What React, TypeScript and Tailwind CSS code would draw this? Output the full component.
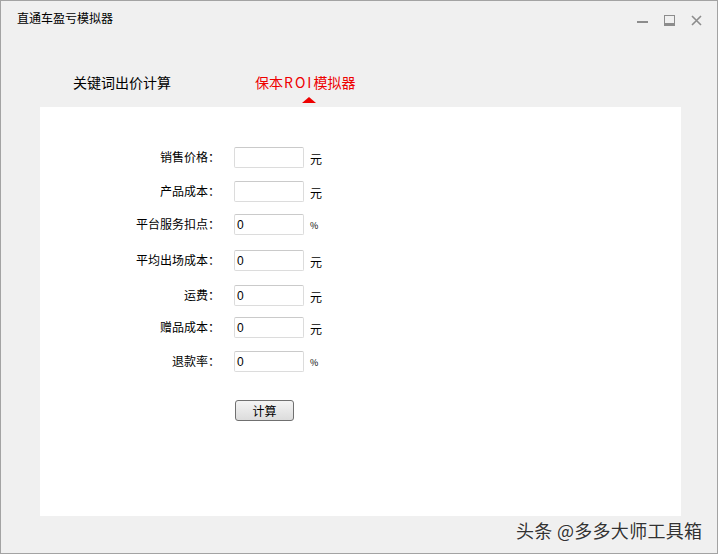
import React from "react";

const rows = [
  { label: "销售价格：", value: "", unit: "元", mt: "mt-0" },
  { label: "产品成本：", value: "", unit: "元", mt: "mt-[13px]" },
  { label: "平台服务扣点：", value: "0", unit: "%", mt: "mt-[12px]" },
  { label: "平均出场成本：", value: "0", unit: "元", mt: "mt-[15px]" },
  { label: "运费：", value: "0", unit: "元", mt: "mt-[14px]" },
  { label: "赠品成本：", value: "0", unit: "元", mt: "mt-[11px]" },
  { label: "退款率：", value: "0", unit: "%", mt: "mt-[13px]" },
];

const cjk = "font-['SimSun','Noto_Sans_CJK_SC',sans-serif]";

function WindowControls() {
  return (
    <div className="flex items-center gap-[16px] mt-[14px] text-[#8c8c8c]">
      <svg width="11" height="11" viewBox="0 0 11 11">
        <rect x="0" y="6" width="11" height="2" fill="currentColor" />
      </svg>
      <svg width="11" height="11" viewBox="0 0 11 11">
        <rect x="0.5" y="0.5" width="10" height="10" fill="none" stroke="currentColor" />
        <rect x="0" y="8" width="11" height="3" fill="currentColor" />
      </svg>
      <svg width="11" height="11" viewBox="0 0 11 11">
        <path d="M1 1 L10 10 M10 1 L1 10" stroke="currentColor" strokeWidth="1.6" />
      </svg>
    </div>
  );
}

export default function App() {
  return (
    <div className={`relative w-[718px] h-[554px] border border-[#a3a3a3] bg-[#f0f0f0] flex flex-col text-black ${cjk}`}>
      {/* title bar */}
      <div className="h-[34px] flex items-start justify-between pl-[16px] pr-[15px]">
        <span className="text-[12px] leading-[16px] mt-[9px]">直通车盈亏模拟器</span>
        <WindowControls />
      </div>

      {/* tabs */}
      <div className="h-[72px] flex items-start pl-[72px] pt-[39px]">
        <div className="text-[14px] leading-[16px] w-[182px]">关键词出价计算</div>
        <div className="flex flex-col items-center">
          <div className="text-[14px] leading-[16px] text-[#ee0000]">
            保本<span className="tracking-[2px] ml-[1px]">ROI</span>模拟器
          </div>
          <div className="mt-[7px] ml-[8px] w-0 h-0 border-l-[7px] border-r-[7px] border-b-[6px] border-l-transparent border-r-transparent border-b-[#ee0000]" />
        </div>
      </div>

      {/* panel */}
      <div className="ml-[39px] w-[641px] h-[409px] bg-white pt-[40px]">
        {rows.map((r) => (
          <div key={r.label} className={`flex items-center h-[21px] ${r.mt}`}>
            <div className="w-[180px] text-right text-[12px] leading-[16px] -mt-[2px]">{r.label}</div>
            <div className="ml-[14px] w-[70px] h-[21px] border border-[#dcdcdc] border-t-[#cacaca] rounded-[2px] bg-white flex items-center pl-[2px] text-[12px] font-['Liberation_Sans',sans-serif]">
              {r.value}
            </div>
            <div className={`ml-[6px] mt-[3px] ${r.unit === "%" ? "text-[9px]" : "text-[12px]"} leading-[16px]`}>{r.unit}</div>
          </div>
        ))}
        <button className="mt-[28px] ml-[195px] w-[59px] h-[21px] rounded-[3px] border border-[#707070] bg-gradient-to-b from-[#f4f4f4] to-[#dcdcdc] text-[12px] leading-[16px] flex items-center justify-center">
          计算
        </button>
      </div>

      {/* watermark */}
      <div className="absolute left-[515px] top-[517px] text-[18px] leading-[24px] tracking-[0.3px] text-[#333] font-['Noto_Sans_CJK_SC',sans-serif] [text-shadow:0_0_2px_#fff]">
        头条 @多多大师工具箱
      </div>
    </div>
  );
}
